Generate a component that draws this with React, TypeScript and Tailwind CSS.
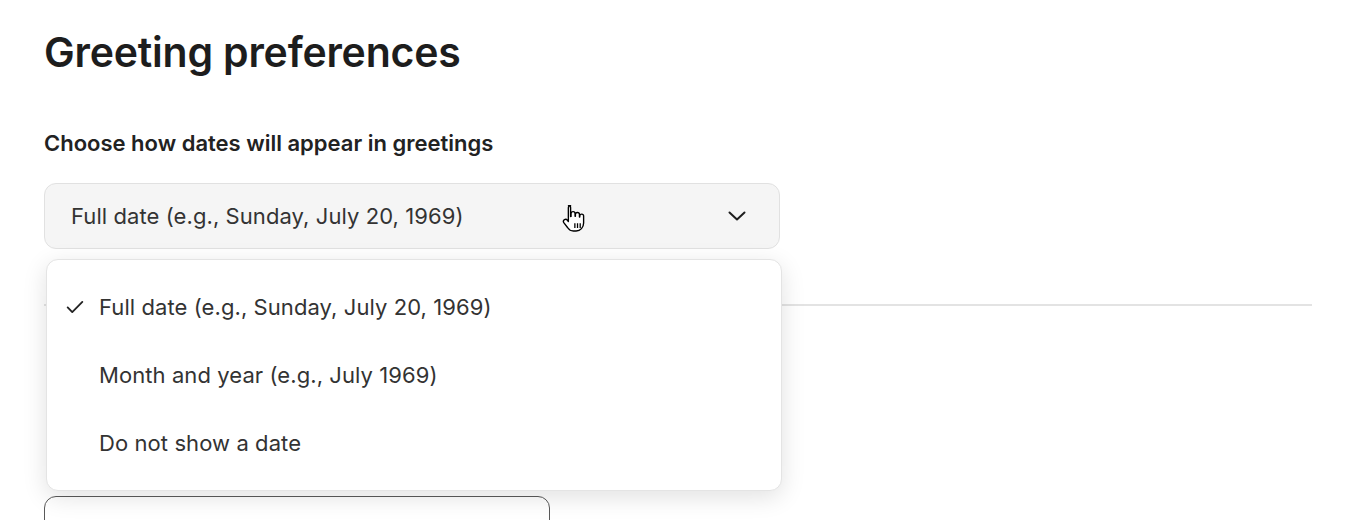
import React from "react";

const options = [
  "Full date (e.g., Sunday, July 20, 1969)",
  "Month and year (e.g., July 1969)",
  "Do not show a date",
];

function Check() {
  return (
    <svg width="22" height="22" viewBox="0 0 24 24" fill="none" stroke="#222" strokeWidth="2" strokeLinecap="round" strokeLinejoin="round">
      <path d="M4 12.5l5 5L20 6.5" />
    </svg>
  );
}

function HandCursor() {
  return (
    <svg width="30" height="32" viewBox="0 0 28 30">
      <path
        d="M8 2.5c1.2 0 2 .9 2 2v8.2l.4-.1V10c0-1.1.8-1.9 1.9-1.9s1.9.8 1.9 1.9v2.4h.3v-1.6c0-1.1.8-1.9 1.9-1.9s1.9.8 1.9 1.9v2.3h.3v-.9c0-1.1.8-1.8 1.8-1.8s1.8.8 1.8 1.8v6.6c0 4.1-3 7.4-7 7.4h-2.6c-2.3 0-4.1-1.1-5.3-3L3.6 18.4c-.6-1-.3-2.2.7-2.8.9-.5 2-.3 2.6.5l1 1.3V4.5c0-1.1.9-2 2.1-2z"
        fill="#fff"
        stroke="#000"
        strokeWidth="1.3"
        strokeLinejoin="round"
        transform="translate(-2 0)"
      />
      <path d="M12 19v4.5M14.5 19v4.5M17 19v4.5" stroke="#000" strokeWidth="1.2" />
    </svg>
  );
}

export default function App() {
  return (
    <div className="h-[520px] overflow-hidden bg-white text-[#1c1c1c] pl-[44px] pr-[48px] pt-[26px] font-['Inter',sans-serif]">
      <h1 className="text-[41px] leading-[52px] font-semibold tracking-[-0.2px] text-[#1d1d1d]">Greeting preferences</h1>

      <p className="mt-[52px] text-[22px] leading-[26px] font-semibold text-[#222]">Choose how dates will appear in greetings</p>

      <div className="relative mt-[27px] w-[736px]">
        <button className="relative flex h-[66px] w-full items-center justify-between rounded-[12px] border border-[#e1e1e1] bg-[#f5f5f5] pl-[26px] pr-[30px] text-left">
          <span className="text-[22px] tracking-[0.08px] text-[#333]">Full date (e.g., Sunday, July 20, 1969)</span>
          <svg width="24" height="24" viewBox="0 0 24 24" fill="none" stroke="#1e1e1e" strokeWidth="2" strokeLinecap="round" strokeLinejoin="round">
            <path d="M4.5 8.5l7.5 7 7.5-7" />
          </svg>
          <span className="absolute left-[517px] top-[19px]">
            <HandCursor />
          </span>
        </button>

        <ul className="absolute left-[2px] top-[76px] z-10 w-[736px] rounded-[12px] border border-[#e4e4e4] bg-white py-[13px] shadow-[0_6px_24px_rgba(0,0,0,0.12)]">
          {options.map((o, i) => (
            <li key={o} className="flex h-[68px] items-center pl-[17px] text-[22px] tracking-[0.08px] text-[#333]">
              <span className="flex w-[35px] items-center">{i === 0 && <Check />}</span>
              {o}
            </li>
          ))}
        </ul>
      </div>

      <hr className="mt-[55px] border-t-2 border-[#e3e3e3]" />

      <div className="mt-[190px] h-[60px] w-[506px] rounded-[12px] border border-[#5a5a5a] bg-white" />
    </div>
  );
}
